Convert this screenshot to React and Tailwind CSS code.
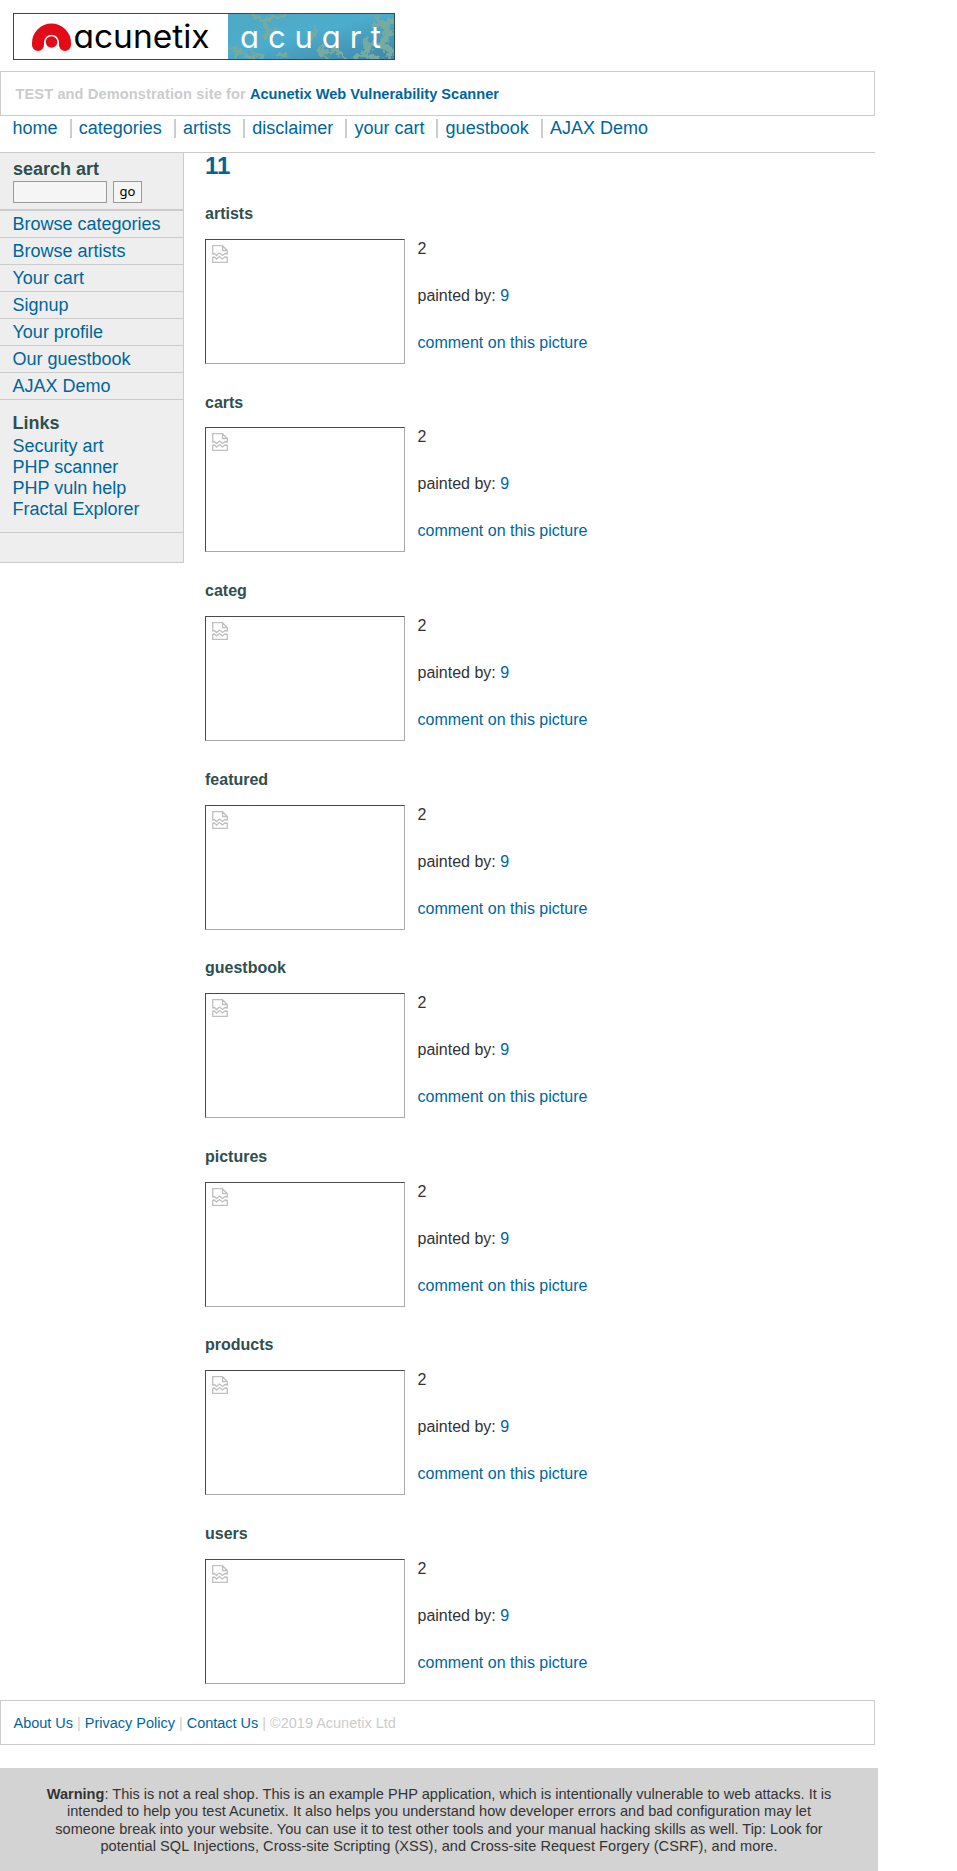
const topLinks = ["home", "categories", "artists", "disclaimer", "your cart", "guestbook", "AJAX Demo"];
const sideLinks = ["Browse categories", "Browse artists", "Your cart", "Signup", "Your profile", "Our guestbook", "AJAX Demo"];
const extLinks = ["Security art", "PHP scanner", "PHP vuln help", "Fractal Explorer"];
const items = ["artists", "carts", "categ", "featured", "guestbook", "pictures", "products", "users"];

function Logo() {
  return (
    <svg width="382" height="47" viewBox="0 0 382 47" className="block">
      <defs>
        <linearGradient id="sea" x1="0" y1="0" x2="1" y2="1">
          <stop offset="0" stopColor="#4fa9c4" />
          <stop offset="0.45" stopColor="#4cadcc" />
          <stop offset="1" stopColor="#3f86ab" />
        </linearGradient>
        <filter id="rough" x="-10%" y="-10%" width="120%" height="120%">
          <feTurbulence type="fractalNoise" baseFrequency="0.22" numOctaves="3" seed="4" />
          <feDisplacementMap in="SourceGraphic" scale="9" xChannelSelector="R" yChannelSelector="G" />
        </filter>
        <clipPath id="artClip"><rect x="215" y="1" width="166" height="45" /></clipPath>
      </defs>
      <rect x="0.5" y="0.5" width="381" height="46" fill="#fff" stroke="#2f4f4f" />
      <rect x="215" y="1" width="166" height="45" fill="url(#sea)" />
      <g clipPath="url(#artClip)">
        <g filter="url(#rough)" fill="none" stroke="#77ab9f" strokeWidth="3.5">
          <path d="M240 2L250 8L258 5L272 3M250 8L256 17L252 26M256 17L264 16M217 35L226 36L232 43L245 45M226 36L222 46M238 38L252 45M262 44L274 40" />
          <path d="M304 14L300 22L296 27M312 32L308 38L314 46M304 38L318 40M322 36L332 46M318 42L324 30M340 46L350 40L358 32" />
          <path strokeWidth="6" d="M382 6L372 12L376 22L366 32L380 38L374 46M352 42L364 46M350 27L358 32L366 32" />
          <path d="M364 2L370 12L358 12M382 20L368 20" />
        </g>
      </g>
      <path d="M25 32V30A13.500 13.500 0 0 1 52 30V32" fill="none" stroke="#e30b17" strokeWidth="12" strokeLinecap="round" />
      <circle cx="38.500" cy="29" r="7.300" fill="#fff" />
      <circle cx="38.500" cy="29" r="5.800" fill="#e30b17" />
      <text x="60.500" y="34.500" className="font-['Inter',sans-serif] font-normal [font-feature-settings:'cv11']" fontSize="32" fill="#000" textLength="136" lengthAdjust="spacingAndGlyphs">acunetix</text>
      <text x="227" y="34.500" className="font-['Inter',sans-serif] font-normal [font-feature-settings:'cv11']" fontSize="31" fill="#fff" textLength="141">acuart</text>
    </svg>
  );
}

function BrokenImage() {
  return (
    <svg width="16" height="18" viewBox="0 0 16 18" fill="none" stroke="#c0c0c0" strokeWidth="1.300">
      <path d="M0.700 9V0.700H10.500L15.300 5.500V9L13 8.500L10.500 10.500L7.500 8L4.500 10.500L2.500 8.500L0.700 9ZM10.500 0.700V5.500H15.300M0.700 17.300V12.300L2.500 12L4.500 14L7.500 11.500L10.500 14L13 12L15.300 12.300V17.300Z" />
    </svg>
  );
}

function A({ children }) {
  return <a className="text-[#006699]">{children}</a>;
}

export default function App() {
  return (
    <div className="min-h-[1871px] bg-white pt-[13px] text-base text-[#333333] font-['Liberation_Sans',Arial,sans-serif]">
      <div className="ml-[13px] h-[58px]"><Logo /></div>
      <div className="flex h-[45px] w-[875px] items-center border border-[#cccccc] pl-[14.500px] pt-[2px] text-[14.600px] font-bold text-[#cccccc]">
        <h6 className="whitespace-pre"><span className="tracking-[0.105px]">TEST and Demonstration site for </span><A>Acunetix Web Vulnerability Scanner</A></h6>
      </div>
      <nav className="flex h-[37px] w-[875px] border-b border-[#cccccc] pl-[12.500px] text-[18px] leading-[24px]">
        {topLinks.map((t, i) => (
          <span key={t} className="flex">
            <A>{t}</A>
            {i < topLinks.length - 1 && <span className="ml-[12px] mr-[7.200px] mt-[3px] h-[19px] w-[2px] bg-[#cccccc]" />}
          </span>
        ))}
      </nav>
      <div className="flex h-[1547px]">
        <aside className="h-[410px] w-[184px] shrink-0 border-r border-b border-[#cccccc] bg-[#eeeeee] text-[18px]">
          <div className="h-[58px] border-b-2 border-[#cccccc] pl-[13px] pt-[5px]">
            <h3 className="h-[23px] font-bold leading-[22px] text-[#2f4f4f]">search art</h3>
            <div className="flex gap-[6px]">
              <input className="block h-[22px] w-[94px] border border-[#999999] bg-[#f5f5f5]" />
              <button className="h-[22px] w-[29px] border border-[#999999] bg-[#f5f5f5] pb-[2px] font-['Noto_Sans',sans-serif] text-[13px] leading-[18px] text-black">go</button>
            </div>
          </div>
          <ul>
            {sideLinks.map((t) => (
              <li key={t} className="h-[27px] border-b border-[#cccccc] pl-[12.500px] leading-[26px]"><A>{t}</A></li>
            ))}
          </ul>
          <div className="h-[133px] border-b border-[#cccccc] pl-[12.500px] pt-[12px]">
            <h3 className="h-[24px] font-bold leading-[22px] text-[#2f4f4f]">Links</h3>
            {extLinks.map((t) => (
              <p key={t} className="leading-[21px]"><A>{t}</A></p>
            ))}
          </div>
        </aside>
        <main className="ml-[21px]">
          <h2 className="h-[45.800px] text-[24px] font-bold leading-[26px] text-[#006699]">11</h2>
          {items.map((t) => (
            <section key={t} className="h-[188.580px]">
              <h3 className="h-[40px] pt-[5.200px] font-bold leading-[20px] text-[#2f4f4f]">{t}</h3>
              <div className="flex">
                <div className="h-[125px] w-[200px] border border-t-[#4a4a4a] border-l-[#4a4a4a] border-r-[#aaaaaa] border-b-[#aaaaaa] pl-[6px] pt-[5px]"><BrokenImage /></div>
                <div className="flex flex-col gap-[29px] pl-[12.500px] pt-px leading-[18px]">
                  <p>2</p>
                  <p>painted by: <A>9</A></p>
                  <p><A>comment on this picture</A></p>
                </div>
              </div>
            </section>
          ))}
        </main>
      </div>
      <footer className="flex h-[45px] w-[875px] items-center border border-[#cccccc] pl-[12.500px] pt-[2px] text-[14.480px] text-[#cccccc]">
        <p><A>About Us</A> | <A>Privacy Policy</A> | <A>Contact Us</A> | ©2019 Acunetix Ltd</p>
      </footer>
      <div className="mt-[23px] h-[103px] w-[878px] bg-[lightgrey] pt-[17.700px] text-center text-[14.570px] leading-[17.400px]">
        <p><b>Warning</b>: This is not a real shop. This is an example PHP application, which is intentionally vulnerable to web attacks. It is</p>
        <p>intended to help you test Acunetix. It also helps you understand how developer errors and bad configuration may let</p>
        <p>someone break into your website. You can use it to test other tools and your manual hacking skills as well. Tip: Look for</p>
        <p className="tracking-[0.050px]">potential SQL Injections, Cross-site Scripting (XSS), and Cross-site Request Forgery (CSRF), and more.</p>
      </div>
    </div>
  );
}
